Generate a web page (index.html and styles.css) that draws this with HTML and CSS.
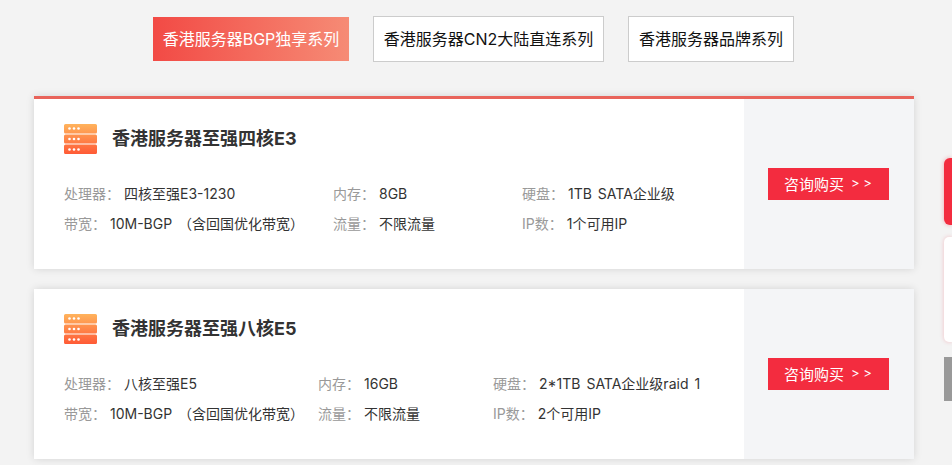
FILE: index.html
```html
<!DOCTYPE html>
<html lang="zh-CN">
<head>
<meta charset="utf-8">
<title>香港服务器</title>
<link rel="stylesheet" href="styles.css">
</head>
<body>
<svg class="defs" width="0" height="0" aria-hidden="true">
  <defs>
    <linearGradient id="srv" x1="0" y1="0" x2="0" y2="1">
      <stop offset="0" stop-color="#ffb35c"/>
      <stop offset="1" stop-color="#ff5a36"/>
    </linearGradient>
    <symbol id="server" viewBox="0 0 33 30">
      <path fill="url(#srv)" d="M1.500 0h30a1.500 1.500 0 0 1 1.500 1.500v6.500a1.500 1.500 0 0 1-1.500 1.500h-30A1.500 1.500 0 0 1 0 8V1.500A1.500 1.500 0 0 1 1.500 0zM1.500 10.500h30a1.500 1.500 0 0 1 1.500 1.500v6a1.500 1.500 0 0 1-1.500 1.500h-30A1.500 1.500 0 0 1 0 18v-6a1.500 1.500 0 0 1 1.500-1.500zM1.500 20.500h30a1.500 1.500 0 0 1 1.500 1.500v6.500a1.500 1.500 0 0 1-1.500 1.500h-30A1.500 1.500 0 0 1 0 28.500V22a1.500 1.500 0 0 1 1.500-1.500z"/>
      <g fill="#fff">
        <circle cx="5.500" cy="4.500" r="1.300"/><circle cx="10" cy="4.500" r="1.300"/><circle cx="14.500" cy="4.500" r="1.300"/>
        <circle cx="5.500" cy="15" r="1.300"/><circle cx="10" cy="15" r="1.300"/><circle cx="14.500" cy="15" r="1.300"/>
        <circle cx="5.500" cy="25.500" r="1.300"/><circle cx="10" cy="25.500" r="1.300"/><circle cx="14.500" cy="25.500" r="1.300"/>
      </g>
    </symbol>
  </defs>
</svg>

<nav class="tabs">
  <a class="tab tab-active">香港服务器BGP独享系列</a>
  <a class="tab">香港服务器CN2大陆直连系列</a>
  <a class="tab">香港服务器品牌系列</a>
</nav>

<main class="list">
  <article class="card card-first">
    <div class="card-body">
      <h2 class="card-title"><svg class="card-icon"><use href="#server"/></svg><span class="title-text">香港服务器至强四核E3</span></h2>
      <div class="specs specs-a">
        <p class="spec"><span class="key">处理器：</span><span class="val">四核至强E3-1230</span></p>
        <p class="spec"><span class="key">内存：</span><span class="val">8GB</span></p>
        <p class="spec"><span class="key">硬盘：</span><span class="val">1TB SATA企业级</span></p>
        <p class="spec"><span class="key">带宽：</span><span class="val">10M-BGP （含回国优化带宽）</span></p>
        <p class="spec"><span class="key">流量：</span><span class="val">不限流量</span></p>
        <p class="spec"><span class="key">IP数：</span><span class="val">1个可用IP</span></p>
      </div>
    </div>
    <div class="card-side"><a class="buy">咨询购买 <span class="arrows">&gt; &gt;</span></a></div>
  </article>

  <article class="card">
    <div class="card-body">
      <h2 class="card-title"><svg class="card-icon"><use href="#server"/></svg><span class="title-text">香港服务器至强八核E5</span></h2>
      <div class="specs specs-b">
        <p class="spec"><span class="key">处理器：</span><span class="val">八核至强E5</span></p>
        <p class="spec"><span class="key">内存：</span><span class="val">16GB</span></p>
        <p class="spec"><span class="key">硬盘：</span><span class="val">2*1TB SATA企业级raid 1</span></p>
        <p class="spec"><span class="key">带宽：</span><span class="val">10M-BGP （含回国优化带宽）</span></p>
        <p class="spec"><span class="key">流量：</span><span class="val">不限流量</span></p>
        <p class="spec"><span class="key">IP数：</span><span class="val">2个可用IP</span></p>
      </div>
    </div>
    <div class="card-side"><a class="buy">咨询购买 <span class="arrows">&gt; &gt;</span></a></div>
  </article>
</main>

<aside class="float-red"></aside>
<aside class="float-white"></aside>
<aside class="float-gray"></aside>
</body>
</html>
```
FILE: styles.css
```css
* { box-sizing: border-box; }

html, body { height: 100%; }

body {
  margin: 0;
  overflow: hidden;
  background: #f3f3f3;
  font-family: Inter, "Noto Sans CJK SC", sans-serif;
  font-size: 14px;
  color: #333;
}

.defs { position: absolute; }

.tabs {
  display: flex;
  align-items: center;
  justify-content: center;
  gap: 24px;
  height: 46px;
  margin-top: 16px;
  padding-right: 5px;
}

.tab {
  display: flex;
  align-items: center;
  justify-content: center;
  height: 46px;
  padding: 0 0 2px;
  width: 166px;
  background: #fff;
  border: 1px solid #ccc;
  font-size: 16px;
  white-space: nowrap;
  color: #111;
}

.tab:nth-child(2) { width: 231px; }

.tab-active {
  width: 196px;
  height: 44px;
  border: 0;
  color: #fff;
  background: linear-gradient(90deg, #f24a45, #f68b75);
}

.list {
  display: flex;
  flex-direction: column;
  gap: 20px;
  width: 880px;
  margin: 34px 0 0 34px;
}

.card {
  display: flex;
  height: 170px;
  background: #fff;
  box-shadow: 0 0 8px rgba(0, 0, 0, 0.13);
}

.card-first {
  height: 173px;
  border-top: 3px solid #e8635a;
}

.card-body {
  flex: 1;
  padding: 25px 0 0 30px;
}

.card-title {
  display: flex;
  align-items: center;
  gap: 15px;
  height: 30px;
  margin: 0 0 24px;
  font-size: 18px;
  font-weight: 700;
  color: #333;
}

.title-text { padding-bottom: 4px; }

.card-icon {
  width: 33px;
  height: 30px;
  flex: none;
}

.specs {
  display: grid;
  grid-auto-rows: 30px;
}

.specs-a { grid-template-columns: 269px 189px 1fr; }
.specs-b { grid-template-columns: 254px 175px 1fr; }

.spec {
  display: flex;
  align-items: center;
  margin: 0;
  white-space: nowrap;
}

.key {
  margin-right: 4px;
  color: #999;
}

.val { word-spacing: 2px; }

.card-side {
  display: flex;
  align-items: center;
  justify-content: center;
  flex: none;
  width: 170px;
  padding-right: 2px;
  background: #f4f5f7;
}

.buy {
  display: flex;
  align-items: center;
  justify-content: center;
  gap: 7px;
  width: 121px;
  height: 32px;
  padding-bottom: 2px;
  background: #f32c3f;
  font-size: 15px;
  color: #fff;
}

.arrows {
  font-size: 13px;
  white-space: pre;
}

.float-red,
.float-white,
.float-gray {
  position: fixed;
  left: 944px;
  width: 8px;
}

.float-red {
  top: 158px;
  height: 67px;
  background: #f32c3f;
  border-radius: 6px 0 0 6px;
  box-shadow: 0 0 4px rgba(243, 44, 63, 0.4);
}

.float-white {
  top: 237px;
  height: 105px;
  background: #fff;
  border-radius: 5px 0 0 5px;
  box-shadow: 0 0 4px rgba(243, 44, 63, 0.25);
}

.float-gray {
  top: 357px;
  height: 44px;
  background: #999;
}
```
